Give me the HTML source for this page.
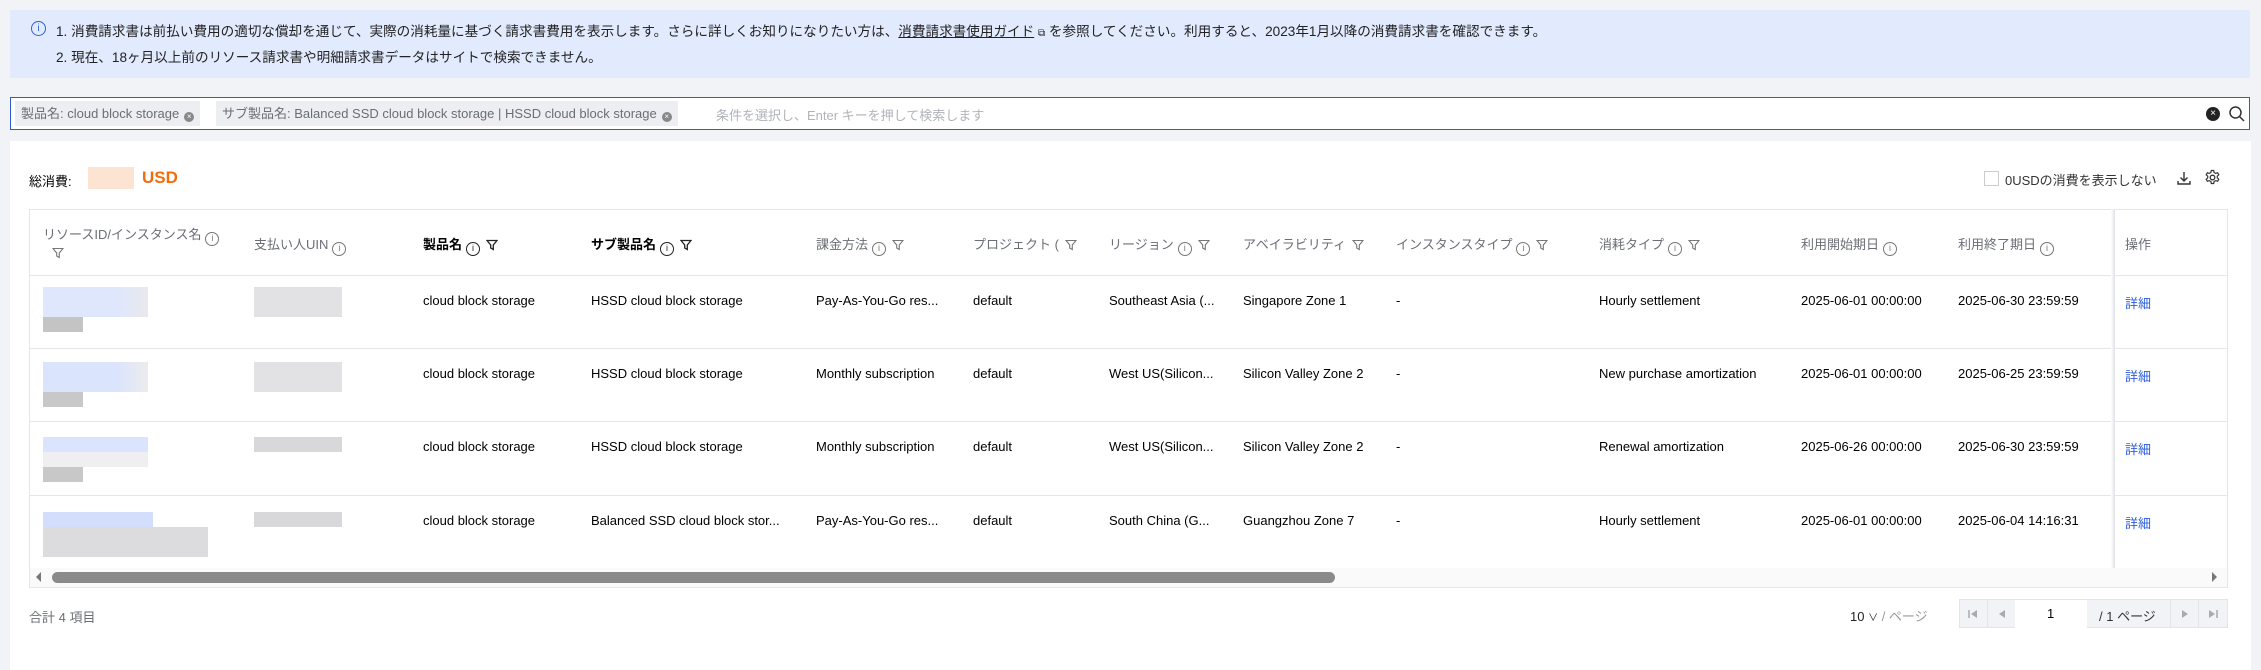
<!DOCTYPE html>
<html><head><meta charset="utf-8"><style>
*{box-sizing:border-box;margin:0;padding:0}
body{width:2261px;height:670px;overflow:hidden;background:#f2f3f7;font-family:"Liberation Sans","Noto Sans CJK JP",sans-serif;font-size:13px;color:#000;position:relative}
.a{position:absolute;white-space:nowrap}
.banner{left:10px;top:10px;width:2240px;height:68px;background:#e2ebfe}
.search{left:10px;top:97px;width:2240px;height:33px;background:#fff;border:1px solid #2f5bd3}
.tag{position:absolute;top:3px;height:25px;background:#eceef2;color:#6b6e75;padding:0 6px;line-height:25px;font-size:13px}
.x{display:inline-block;width:10px;height:10px;border-radius:50%;background:#888;color:#fff;font-size:8px;line-height:10px;text-align:center;margin-left:5px;vertical-align:-1px}
.card{left:10px;top:141px;width:2241px;height:529px;background:#fff}
.hdr{color:#6b6e75}
.hb{color:#000;font-weight:bold}
.i{display:inline-block;width:14px;height:14px;border:1.3px solid #777;border-radius:50%;font-size:9px;line-height:11px;text-align:center;color:#777;margin-left:4px;vertical-align:-2px;font-weight:normal}
.f{display:inline-block;margin-left:6px;vertical-align:-2px}
.line{position:absolute;height:1px;background:#e5e6ea}
.bl{position:absolute}
.lk{color:#2d5fe0}
</style></head><body>
<div class="a banner"></div>
<div class="a" style="left:31px;top:21px;width:15px;height:15px;border:1.3px solid #2d5fe0;border-radius:50%;color:#2d5fe0;font-size:10px;line-height:13px;text-align:center">i</div>
<div class="a" style="left:56px;top:20px;color:#222;font-size:13.6px">1. 消費請求書は前払い費用の適切な償却を通じて、実際の消耗量に基づく請求書費用を表示します。さらに詳しくお知りになりたい方は、<span style="text-decoration:underline">消費請求書使用ガイド</span> <span style="font-size:10px">⧉</span> を参照してください。利用すると、2023年1月以降の消費請求書を確認できます。</div>
<div class="a" style="left:56px;top:46px;color:#222;font-size:13.6px">2. 現在、18ヶ月以上前のリソース請求書や明細請求書データはサイトで検索できません。</div>

<div class="a search">
<div class="tag" style="left:4px">製品名: cloud block storage<span class="x">×</span></div>
<div class="tag" style="left:205px">サブ製品名: Balanced SSD cloud block storage | HSSD cloud block storage<span class="x">×</span></div>
<div class="a" style="left:705px;top:7px;color:#b0b3b8">条件を選択し、Enter キーを押して検索します</div>
<div class="a" style="left:2195px;top:9px;width:14px;height:14px;border-radius:50%;background:#222;color:#fff;font-size:10px;line-height:14px;text-align:center">×</div>
<svg class="a" style="left:2217px;top:7px" width="18" height="18" viewBox="0 0 18 18"><circle cx="7.5" cy="7.5" r="5.5" fill="none" stroke="#333" stroke-width="1.5"/><path d="M11.5 11.5L16 16" stroke="#333" stroke-width="1.5"/></svg>
</div>

<div class="a card"></div>
<div class="a" style="left:29px;top:171px;font-size:13px">総消費:</div>
<div class="a" style="left:88px;top:167px;width:46px;height:22px;background:#fde3d2"></div>
<div class="a" style="left:142px;top:168px;color:#f36d0c;font-weight:bold;font-size:17px">USD</div>
<div class="a" style="left:1984px;top:171px;width:15px;height:15px;border:1px solid #ccc"></div>
<div class="a" style="left:2005px;top:170px;color:#333">0USDの消費を表示しない</div>
<svg class="a" style="left:2176px;top:170px" width="16" height="16" viewBox="0 0 16 16"><path d="M8 2v9M4.5 7.5L8 11l3.5-3.5M2 11v3h12v-3" fill="none" stroke="#333" stroke-width="1.4"/></svg>
<svg class="a" style="left:2204px;top:169px" width="17" height="17" viewBox="0 0 17 17"><circle cx="8.5" cy="8.5" r="2.3" fill="none" stroke="#333" stroke-width="1.3"/><path d="M7.3 1.5h2.4l.4 2 1.6.9 1.9-.7 1.2 2.1-1.5 1.3v1.8l1.5 1.3-1.2 2.1-1.9-.7-1.6.9-.4 2H7.3l-.4-2-1.6-.9-1.9.7-1.2-2.1 1.5-1.300V7.1L2.2 5.8l1.2-2.1 1.9.7 1.6-.9z" fill="none" stroke="#333" stroke-width="1.2"/></svg>

<div class="line" style="left:29px;top:209px;width:2199px"></div>
<div class="line" style="left:29px;top:275px;width:2199px"></div>
<div class="line" style="left:29px;top:348px;width:2199px"></div>
<div class="line" style="left:29px;top:421px;width:2199px"></div>
<div class="line" style="left:29px;top:495px;width:2199px"></div>
<div class="line" style="left:29px;top:587px;width:2199px"></div>
<div class="a" style="left:29px;top:209px;width:1px;height:379px;background:#e5e6ea"></div>
<div class="a" style="left:2227px;top:209px;width:1px;height:379px;background:#e5e6ea"></div>
<div class="a" style="left:2111px;top:209px;width:4px;height:359px;background:linear-gradient(90deg,#fff,#e0e1e5)"></div>

<div class="a hdr" style="left:43px;top:224px">リソースID/インスタンス名<span class="i">i</span></div>
<svg class="a" style="left:52px;top:247px" width="12" height="12" viewBox="0 0 12 12"><path d="M1 1.5h10L7.3 6v4.5L4.7 9V6z" fill="none" stroke="#777" stroke-width="1.1"/></svg>
<div class="a hdr" style="left:254px;top:234px">支払い人UIN<span class="i">i</span></div>
<div class="a hb" style="left:423px;top:234px">製品名<span class="i" style="border-color:#222;color:#222">i</span><svg class="f" width="12" height="12" viewBox="0 0 12 12"><path d="M1 1.5h10L7.3 6v4.5L4.7 9V6z" fill="none" stroke="#222" stroke-width="1.3"/></svg></div>
<div class="a hb" style="left:591px;top:234px">サブ製品名<span class="i" style="border-color:#222;color:#222">i</span><svg class="f" width="12" height="12" viewBox="0 0 12 12"><path d="M1 1.5h10L7.3 6v4.5L4.7 9V6z" fill="none" stroke="#222" stroke-width="1.3"/></svg></div>
<div class="a hdr" style="left:816px;top:234px">課金方法<span class="i">i</span><svg class="f" width="12" height="12" viewBox="0 0 12 12"><path d="M1 1.5h10L7.3 6v4.5L4.7 9V6z" fill="none" stroke="#777" stroke-width="1.1"/></svg></div>
<div class="a hdr" style="left:973px;top:234px">プロジェクト (<svg class="f" width="12" height="12" viewBox="0 0 12 12"><path d="M1 1.5h10L7.3 6v4.5L4.7 9V6z" fill="none" stroke="#777" stroke-width="1.1"/></svg></div>
<div class="a hdr" style="left:1109px;top:234px">リージョン<span class="i">i</span><svg class="f" width="12" height="12" viewBox="0 0 12 12"><path d="M1 1.5h10L7.3 6v4.5L4.7 9V6z" fill="none" stroke="#777" stroke-width="1.1"/></svg></div>
<div class="a hdr" style="left:1243px;top:234px">アベイラビリティ<svg class="f" width="12" height="12" viewBox="0 0 12 12"><path d="M1 1.5h10L7.3 6v4.5L4.7 9V6z" fill="none" stroke="#777" stroke-width="1.1"/></svg></div>
<div class="a hdr" style="left:1396px;top:234px">インスタンスタイプ<span class="i">i</span><svg class="f" width="12" height="12" viewBox="0 0 12 12"><path d="M1 1.5h10L7.3 6v4.5L4.7 9V6z" fill="none" stroke="#777" stroke-width="1.1"/></svg></div>
<div class="a hdr" style="left:1599px;top:234px">消耗タイプ<span class="i">i</span><svg class="f" width="12" height="12" viewBox="0 0 12 12"><path d="M1 1.5h10L7.3 6v4.5L4.7 9V6z" fill="none" stroke="#777" stroke-width="1.1"/></svg></div>
<div class="a hdr" style="left:1801px;top:234px">利用開始期日<span class="i">i</span></div>
<div class="a hdr" style="left:1958px;top:234px">利用終了期日<span class="i">i</span></div>
<div class="a hdr" style="left:2125px;top:234px">操作</div>

<div class="a" style="left:423px;top:293px">cloud block storage</div>
<div class="a" style="left:591px;top:293px">HSSD cloud block storage</div>
<div class="a" style="left:816px;top:293px">Pay-As-You-Go res...</div>
<div class="a" style="left:973px;top:293px">default</div>
<div class="a" style="left:1109px;top:293px">Southeast Asia (...</div>
<div class="a" style="left:1243px;top:293px">Singapore Zone 1</div>
<div class="a" style="left:1396px;top:293px">-</div>
<div class="a" style="left:1599px;top:293px">Hourly settlement</div>
<div class="a" style="left:1801px;top:293px">2025-06-01 00:00:00</div>
<div class="a" style="left:1958px;top:293px">2025-06-30 23:59:59</div>
<div class="a lk" style="left:2125px;top:293px">詳細</div>

<div class="a" style="left:423px;top:366px">cloud block storage</div>
<div class="a" style="left:591px;top:366px">HSSD cloud block storage</div>
<div class="a" style="left:816px;top:366px">Monthly subscription</div>
<div class="a" style="left:973px;top:366px">default</div>
<div class="a" style="left:1109px;top:366px">West US(Silicon...</div>
<div class="a" style="left:1243px;top:366px">Silicon Valley Zone 2</div>
<div class="a" style="left:1396px;top:366px">-</div>
<div class="a" style="left:1599px;top:366px">New purchase amortization</div>
<div class="a" style="left:1801px;top:366px">2025-06-01 00:00:00</div>
<div class="a" style="left:1958px;top:366px">2025-06-25 23:59:59</div>
<div class="a lk" style="left:2125px;top:366px">詳細</div>

<div class="a" style="left:423px;top:439px">cloud block storage</div>
<div class="a" style="left:591px;top:439px">HSSD cloud block storage</div>
<div class="a" style="left:816px;top:439px">Monthly subscription</div>
<div class="a" style="left:973px;top:439px">default</div>
<div class="a" style="left:1109px;top:439px">West US(Silicon...</div>
<div class="a" style="left:1243px;top:439px">Silicon Valley Zone 2</div>
<div class="a" style="left:1396px;top:439px">-</div>
<div class="a" style="left:1599px;top:439px">Renewal amortization</div>
<div class="a" style="left:1801px;top:439px">2025-06-26 00:00:00</div>
<div class="a" style="left:1958px;top:439px">2025-06-30 23:59:59</div>
<div class="a lk" style="left:2125px;top:439px">詳細</div>

<div class="a" style="left:423px;top:513px">cloud block storage</div>
<div class="a" style="left:591px;top:513px">Balanced SSD cloud block stor...</div>
<div class="a" style="left:816px;top:513px">Pay-As-You-Go res...</div>
<div class="a" style="left:973px;top:513px">default</div>
<div class="a" style="left:1109px;top:513px">South China (G...</div>
<div class="a" style="left:1243px;top:513px">Guangzhou Zone 7</div>
<div class="a" style="left:1396px;top:513px">-</div>
<div class="a" style="left:1599px;top:513px">Hourly settlement</div>
<div class="a" style="left:1801px;top:513px">2025-06-01 00:00:00</div>
<div class="a" style="left:1958px;top:513px">2025-06-04 14:16:31</div>
<div class="a lk" style="left:2125px;top:513px">詳細</div>

<div class="bl" style="left:43px;top:287px;width:105px;height:30px;background:linear-gradient(90deg,#dfe7fd 70%,#e8e9ec)"></div>
<div class="bl" style="left:43px;top:317px;width:40px;height:15px;background:#c4c4c4"></div>
<div class="bl" style="left:254px;top:287px;width:88px;height:30px;background:#e2e2e4"></div>
<div class="bl" style="left:43px;top:362px;width:105px;height:30px;background:linear-gradient(90deg,#dbe4fd 70%,#ececee)"></div>
<div class="bl" style="left:43px;top:392px;width:40px;height:15px;background:#c8c8c8"></div>
<div class="bl" style="left:254px;top:362px;width:88px;height:30px;background:#e2e2e4"></div>
<div class="bl" style="left:43px;top:437px;width:105px;height:30px;background:linear-gradient(180deg,#dbe4fd 50%,#efeff1 50%)"></div>
<div class="bl" style="left:43px;top:467px;width:40px;height:15px;background:#c8c8c8"></div>
<div class="bl" style="left:254px;top:437px;width:88px;height:15px;background:#d8d8da"></div>
<div class="bl" style="left:43px;top:512px;width:110px;height:15px;background:#d3defd"></div>
<div class="bl" style="left:43px;top:527px;width:165px;height:30px;background:#dcdcde"></div>
<div class="bl" style="left:254px;top:512px;width:88px;height:15px;background:#d8d8da"></div>

<div class="a" style="left:30px;top:568px;width:2197px;height:19px;background:#fafafa"></div>
<svg class="a" style="left:34px;top:571px" width="8" height="12"><path d="M7 1L2 6l5 5z" fill="#777"/></svg>
<div class="a" style="left:52px;top:572px;width:1283px;height:11px;border-radius:6px;background:#8a8a8a"></div>
<svg class="a" style="left:2211px;top:571px" width="8" height="12"><path d="M1 1l5 5-5 5z" fill="#777"/></svg>

<div class="a" style="left:29px;top:607px;color:#6b6e75">合計 4 項目</div>
<div class="a" style="left:1850px;top:606px;color:#222">10 <span style="font-size:10px">∨</span> <span style="color:#999">/ ページ</span></div>
<div class="a" style="left:1959px;top:599px;width:269px;height:29px;border:1px solid #e2e4e8;background:#f2f3f6"></div>
<div class="a" style="left:1987px;top:600px;width:1px;height:27px;background:#e2e4e8"></div>
<div class="a" style="left:2015px;top:600px;width:72px;height:28px;background:#fff"></div>
<div class="a" style="left:2047px;top:606px">1</div>
<div class="a" style="left:2099px;top:606px;color:#333">/ 1 ページ</div>
<div class="a" style="left:2170px;top:600px;width:1px;height:27px;background:#e2e4e8"></div>
<div class="a" style="left:2198px;top:600px;width:1px;height:27px;background:#e2e4e8"></div>
<svg class="a" style="left:1968px;top:609px" width="10" height="10"><path d="M1 1v8" stroke="#aaa" stroke-width="1.5"/><path d="M9 1L3 5l6 4z" fill="#aaa"/></svg>
<svg class="a" style="left:1997px;top:609px" width="10" height="10"><path d="M8 1L2 5l6 4z" fill="#aaa"/></svg>
<svg class="a" style="left:2180px;top:609px" width="10" height="10"><path d="M2 1l6 4-6 4z" fill="#aaa"/></svg>
<svg class="a" style="left:2208px;top:609px" width="10" height="10"><path d="M1 1l6 4-6 4z" fill="#aaa"/><path d="M9 1v8" stroke="#aaa" stroke-width="1.5"/></svg>
</body></html>
